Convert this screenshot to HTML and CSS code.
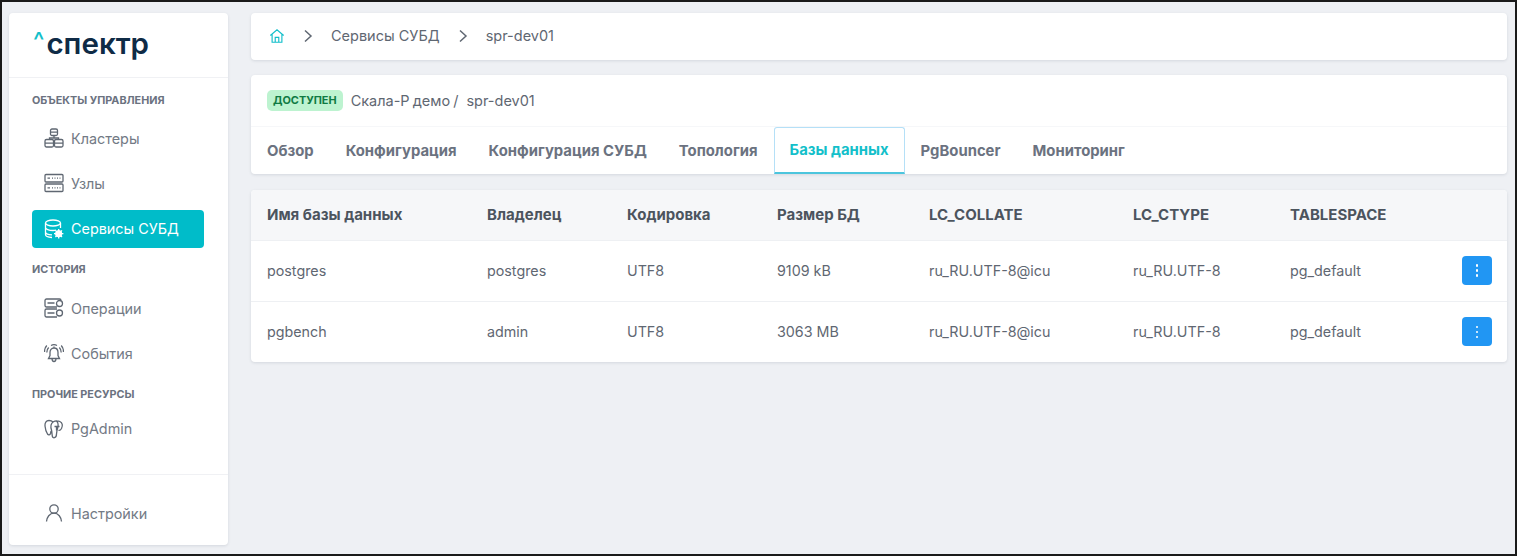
FILE: index.html
```html
<!DOCTYPE html>
<html lang="ru">
<head>
<meta charset="utf-8">
<title>Спектр</title>
<link rel="stylesheet" href="styles.css">
</head>
<body>
<div class="frame">
  <aside class="sidebar">
    <div class="logo"><span class="caret">^</span>спектр</div>
    <nav class="nav">
      <div class="group">Объекты управления</div>
      <a class="item"><svg class="ico" viewBox="0 0 20 20"><rect x="6.500" y="1" width="7" height="6.500" rx="1.500"/><path d="M6.500 4.200h7M10 7.500v2.500M5.500 11.500V10h9v1.500"/><rect x="1" y="11.500" width="8.500" height="7.500" rx="1.500"/><rect x="10.500" y="11.500" width="8.500" height="7.500" rx="1.500"/><path d="M1 15.200h8.500M10.500 15.200h8.500"/></svg>Кластеры</a>
      <a class="item"><svg class="ico" viewBox="0 0 20 20"><rect x="1" y="1.500" width="18" height="7.500" rx="1"/><rect x="1" y="11" width="18" height="7.500" rx="1"/><path d="M3.500 5.200h2.500M8 5.200h1M10.500 5.200h1M13 5.200h1M15.500 5.200h1M3.500 14.800h2.500M8 14.800h1M10.500 14.800h1M13 14.800h1M15.500 14.800h1"/></svg>Узлы</a>
      <a class="item active"><svg class="ico" viewBox="0 0 20 20"><ellipse cx="9" cy="4" rx="7.500" ry="3"/><path d="M1.500 4v11.500c0 1.600 3 2.800 6.500 3M16.500 4v5M1.500 8.500c0 1.600 3.300 3 7.500 3 1 0 2-.1 3-.3M1.500 13c0 1.500 3 2.700 6.500 2.900"/><circle class="dot" cx="14.700" cy="14.700" r="3.200"/><path class="teeth" d="M14.700 10v9.400M10 14.700h9.400M11.400 11.400l6.600 6.600M18 11.400l-6.600 6.600"/></svg>Сервисы СУБД</a>
      <div class="group">История</div>
      <a class="item"><svg class="ico" viewBox="0 0 20 20"><path d="M13 9H2.500A1.500 1.500 0 0 1 1 7.500v-5A1.500 1.500 0 0 1 2.500 1h13A1.500 1.500 0 0 1 17 2.500M13 19H2.500A1.500 1.500 0 0 1 1 17.500v-5A1.500 1.500 0 0 1 2.500 11H13"/><circle cx="15.500" cy="5.500" r="3"/><circle cx="15.500" cy="15" r="3"/><path d="M3.500 5h7M3.500 15h7"/></svg>Операции</a>
      <a class="item"><svg class="ico" viewBox="0 0 20 20"><path d="M10 5c-2.700 0-4 2.200-4 4.500v3L4.500 15.500h11L14 12.500v-3C14 7.200 12.700 5 10 5zM8 15.500c0 2 .8 3 2 3s2-1 2-3M10 3.500V5M4.700 4.500C3.300 5.800 2.800 7.500 2.800 9.500M15.300 4.500c1.400 1.300 1.900 3 1.900 5M2.800 2.500C1 4.300.5 6.500.5 9M17.200 2.500C19 4.300 19.500 6.500 19.500 9M7 2.500c1.800-1 4.200-1 6 0"/></svg>События</a>
      <div class="group tight">Прочие ресурсы</div>
      <a class="item"><svg class="ico" viewBox="0 0 20 20"><path d="M5 1.500C2 1.500.7 4 1 7c.3 3 1.200 6 2.500 8 1 1.400 2.500 1 3-.5l.6-2.500M5 1.500c1.500 0 3 .5 4 1.500 1.500-1 3-1.300 4-1.200 1 0 2 .3 2.800.7 2.700 1.300 3.200 4 1.700 7-1 1.800-2 2-3 1.800M9 3C6.800 4.800 6.500 8 7.500 11c.5 2 .5 4.500.8 6 .3 1.500 1.200 2 2.200 1.700 1.500-.4 2-1.700 2-3.700l.5-3.500c.5-2 1.700-4.500 1-7-.3-1.300-1-2-1.800-2.700M10.500 7.500h5M12.500 7.500v4"/></svg>PgAdmin</a>
    </nav>
    <div class="foot">
      <a class="item"><svg class="ico" viewBox="0 0 20 20"><circle cx="10" cy="6" r="4.200"/><path d="M2.500 18.500c.4-4.200 3-8.300 7.500-8.300s7.100 4.100 7.500 8.300"/></svg>Настройки</a>
    </div>
  </aside>
  <main class="main">
    <div class="card crumbs">
      <svg class="home" viewBox="0 0 18 18"><path d="M1.500 8.500 9 2l7.500 6.500M3.500 7V16h11V7M7 16v-5.500h4V16"/></svg>
      <svg class="chev" viewBox="0 0 10 14"><path d="M2 1.500 8 7l-6 5.500"/></svg>
      <span>Сервисы СУБД</span>
      <svg class="chev" viewBox="0 0 10 14"><path d="M2 1.500 8 7l-6 5.500"/></svg>
      <span>spr-dev01</span>
    </div>
    <div class="card head">
      <div class="title"><span class="badge">Доступен</span><span class="name">Скала-Р демо /</span><span>spr-dev01</span></div>
      <div class="tabs">
        <a class="tab">Обзор</a>
        <a class="tab">Конфигурация</a>
        <a class="tab">Конфигурация СУБД</a>
        <a class="tab">Топология</a>
        <a class="tab current">Базы данных</a>
        <a class="tab">PgBouncer</a>
        <a class="tab">Мониторинг</a>
      </div>
    </div>
    <div class="card tablecard">
      <table>
        <thead>
          <tr><th class="c1">Имя базы данных</th><th class="c2">Владелец</th><th class="c3">Кодировка</th><th class="c4">Размер БД</th><th class="c5">LC_COLLATE</th><th class="c6">LC_CTYPE</th><th class="c7">TABLESPACE</th><th class="c8"></th></tr>
        </thead>
        <tbody>
          <tr><td>postgres</td><td>postgres</td><td>UTF8</td><td>9109 kB</td><td>ru_RU.UTF-8@icu</td><td>ru_RU.UTF-8</td><td>pg_default</td><td class="act"><button class="more"><i></i><i></i><i></i></button></td></tr>
          <tr><td>pgbench</td><td>admin</td><td>UTF8</td><td>3063 MB</td><td>ru_RU.UTF-8@icu</td><td>ru_RU.UTF-8</td><td>pg_default</td><td class="act"><button class="more"><i></i><i></i><i></i></button></td></tr>
        </tbody>
      </table>
    </div>
  </main>
</div>
</body>
</html>
```
FILE: styles.css
```css
* { box-sizing: border-box; }
html, body { margin: 0; padding: 0; background: #fff; }
body { font-family: Inter, "Noto Sans", sans-serif; color: #5f6772; }
.frame {
  width: 1517px; height: 556px;
  border: 2px solid #1a1a1a;
  background: #eef0f4;
  display: flex;
  padding: 11px 8px 9px 7px;
  gap: 23px;
}
.sidebar {
  width: 219px; flex: none;
  background: #fff; border-radius: 4px;
  box-shadow: 0 1px 3px rgba(60,70,90,.14);
  display: flex; flex-direction: column;
}
.logo {
  height: 65px; padding: 0 0 2px 24px;
  border-bottom: 1px solid #f0f1f4;
  display: flex; align-items: center;
  font: 600 29.500px/1 Inter, sans-serif;
  color: #0f2b46;
}
.caret { color: #13bfca; font-size: 24px; font-weight: 500; margin-top: -6px; margin-right: 2px; }
.nav { flex: 1; padding: 16px 24px 0 23px; }
.group {
  font-size: 10.800px; font-weight: 700; line-height: 14px;
  text-transform: uppercase; color: #6b7280;
  margin-bottom: 11px;
}
.group ~ .group { margin-top: 15.500px; margin-bottom: 12px; }
.group ~ .group.tight { margin-bottom: 8px; }
.item {
  height: 38px; padding-left: 12px; margin-bottom: 7.300px;
  display: flex; align-items: center; gap: 7px;
  font-size: 14.400px; color: #737a85; border-radius: 4px;
}
.item.active { background: #00bcc9; color: #fff; }
.ico { width: 20px; height: 20px; flex: none; fill: none; stroke: #5f6772; stroke-width: 1.300; }
.active .ico { stroke: #fff; }
.active .dot { fill: #fff; stroke-width: 1; }
.active .teeth { stroke-width: 1.300; }
.foot { height: 71px; border-top: 1px solid #f0f1f4; padding: 19px 24px 0 23px; }
.main { flex: 1; min-width: 0; display: flex; flex-direction: column; gap: 15px; }
.card { background: #fff; border-radius: 4px; box-shadow: 0 1px 3px rgba(60,70,90,.14); }
.crumbs {
  height: 47px; padding: 0 16px 2px 18px;
  display: flex; align-items: center;
  font-size: 14.500px; color: #5f6772;
}
.home { width: 16px; height: 16px; fill: none; stroke: #13bfca; stroke-width: 1.300; }
.chev { width: 10px; height: 14px; fill: none; stroke: #5f6772; stroke-width: 1.500; margin: 0 18px; }
.head { height: 99px; display: flex; flex-direction: column; }
.title {
  height: 52px; padding: 0 16px 1px;
  border-bottom: 1px solid #f6f7f9;
  display: flex; align-items: center; font-size: 14.500px; color: #5f6772;
}
.badge {
  background: #bdf3d0; color: #0f7a43; border-radius: 5px;
  height: 21px; padding: 0 6px; display: flex; align-items: center;
  font-size: 10.900px; font-weight: 700; text-transform: uppercase;
  margin-right: 8px;
}
.name { margin-right: 8px; word-spacing: -1px; }
.tabs { flex: 1; display: flex; }
.tab {
  height: 47px; padding: 0 15px; margin-bottom: -1px;
  display: flex; align-items: center;
  font-size: 14.850px; font-weight: 700; color: #6b7280;
  border: 1px solid transparent;
}
.tab.current {
  color: #13bfca; border-color: #b5e0f7;
  border-bottom: 2px solid #4cc5dd; border-radius: 3px 3px 0 0;
}
.tablecard { margin-top: 1px; overflow: hidden; }
table { width: 100%; border-collapse: collapse; table-layout: fixed; font-size: 14.300px; }
th {
  height: 50px; padding: 0 0 0 16px; text-align: left;
  font-size: 15px; font-weight: 700; color: #4c545e; background: #f6f7f9;
}
td { height: 61px; padding: 0 0 0 16px; color: #5f6772; border-top: 1px solid #eef0f3; }
.c1 { width: 220px; } .c2 { width: 140px; } .c3 { width: 150px; }
.c4 { width: 152px; } .c5 { width: 204px; } .c6 { width: 157px; }
.c7 { width: 160px; } .c8 { width: auto; }
.act { padding: 0 15px 0 0; text-align: right; }
.more {
  width: 30px; height: 29px; border: 0; border-radius: 4px; background: #2196f3;
  display: inline-flex; flex-direction: column; align-items: center; justify-content: center; gap: 2.500px; padding: 0; vertical-align: middle;
}
.more i { width: 2.500px; height: 2.500px; border-radius: 50%; background: #fff; display: block; }
```
